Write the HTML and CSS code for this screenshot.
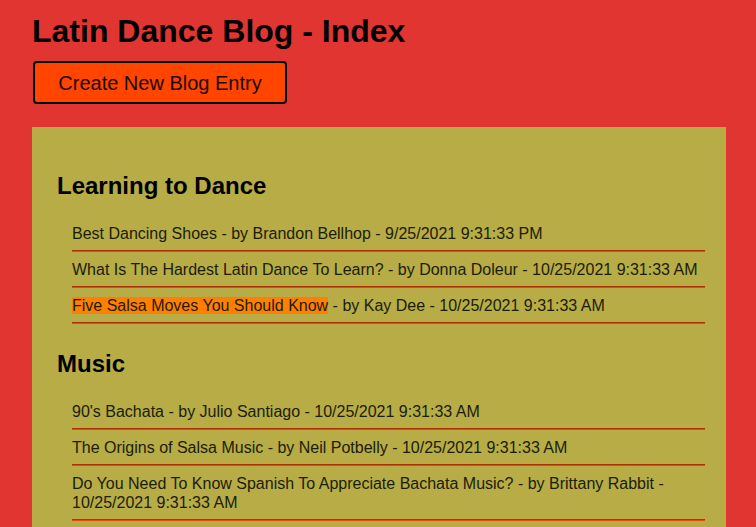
FILE: index.html
```html
<!DOCTYPE html>
<html lang="en">
<head>
<meta charset="utf-8">
<title>Latin Dance Blog - Index</title>
<link rel="stylesheet" href="styles.css">
</head>
<body>
<h1 class="title">Latin Dance Blog - Index</h1>
<button class="create-btn" type="button">Create New Blog Entry</button>
<main class="panel">
  <section class="category">
    <h2 class="category-title">Learning to Dance</h2>
    <ul class="entries">
      <li class="entry"><a class="entry-link" href="#">Best Dancing Shoes</a> - by Brandon Bellhop - 9/25/2021 9:31:33 PM</li>
      <li class="entry"><a class="entry-link" href="#">What Is The Hardest Latin Dance To Learn?</a> - by Donna Doleur - 10/25/2021 9:31:33 AM</li>
      <li class="entry"><a class="entry-link is-hover" href="#">Five Salsa Moves You Should Know</a> - by Kay Dee - 10/25/2021 9:31:33 AM</li>
    </ul>
  </section>
  <section class="category">
    <h2 class="category-title">Music</h2>
    <ul class="entries">
      <li class="entry"><a class="entry-link" href="#">90's Bachata</a> - by Julio Santiago - 10/25/2021 9:31:33 AM</li>
      <li class="entry"><a class="entry-link" href="#">The Origins of Salsa Music</a> - by Neil Potbelly - 10/25/2021 9:31:33 AM</li>
      <li class="entry"><a class="entry-link" href="#">Do You Need To Know Spanish To Appreciate Bachata Music?</a> - by Brittany Rabbit - 10/25/2021 9:31:33 AM</li>
    </ul>
  </section>
</main>
</body>
</html>
```
FILE: styles.css
```css
html, body {
  margin: 0;
  padding: 0;
}
body {
  background: #e03530;
  font-family: "Liberation Sans", Arial, sans-serif;
  color: #000;
  padding: 13px 30px 0 32px;
}
.title {
  margin: 0 0 12px 0;
  font-size: 32px;
  font-weight: bold;
  line-height: 36px;
}
.create-btn {
  display: block;
  box-sizing: border-box;
  width: 254px;
  white-space: nowrap;
  margin: 0 0 23px 1px;
  font-family: "Liberation Sans", Arial, sans-serif;
  font-size: 20px;
  line-height: 23px;
  color: #1a0800;
  background: #ff4500;
  border: 2px solid #000;
  border-radius: 4px;
  padding: 9px 0 7px 0;
  text-align: center;
}
.panel {
  background: #b7ac45;
  padding: 18px 21px 20px 25px;
}
.category-title {
  margin: 27px 0 17px 0;
  font-size: 24px;
  line-height: 27px;
  font-weight: bold;
}
.entries {
  list-style: none;
  margin: 0;
  padding: 0 0 0 15px;
}
.entry {
  font-size: 16px;
  line-height: 19px;
  padding: 7.7px 0 7.3px 0;
  color: #1c1c0a;
  border-bottom: 1px solid #b02f00;
  box-shadow: 0 1px 0 #f04800;
  margin-bottom: 1px;
}
.entry-link {
  color: inherit;
  text-decoration: none;
}
.entry-link.is-hover {
  background: #ff8000;
}
```
